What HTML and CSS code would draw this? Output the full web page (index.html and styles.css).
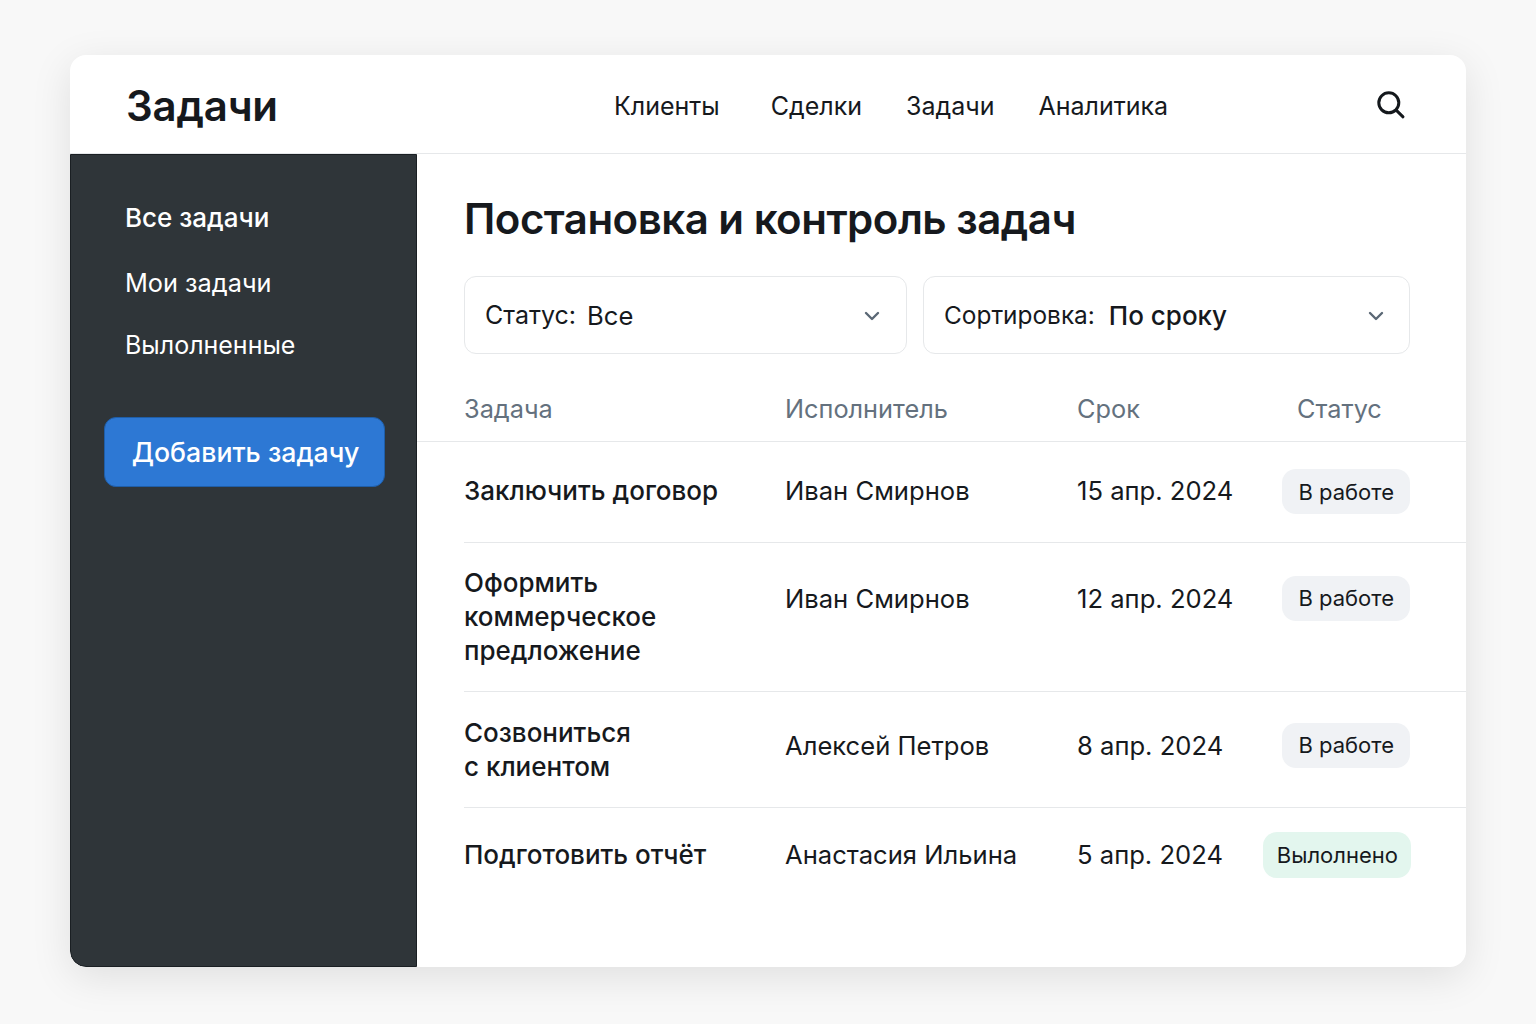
FILE: index.html
```html
<!DOCTYPE html>
<html lang="ru">
<head>
  <meta charset="UTF-8">
  <meta name="viewport" content="width=device-width, initial-scale=1.0">
  <title>Задачи</title>
  <link rel="stylesheet" href="styles.css">
</head>
<body>
  <div class="card">
    <header class="topbar">
      <div class="logo">Задачи</div>
      <nav class="topnav">
        <a class="nav-clients">Клиенты</a>
        <a>Сделки</a>
        <a>Задачи</a>
        <a>Аналитика</a>
      </nav>
      <svg class="search" width="30" height="30" viewBox="0 0 30 30" fill="none" stroke="#14181c" stroke-width="3" stroke-linecap="round">
        <circle cx="12.8" cy="12.8" r="10"/>
        <path d="M20.2 20.2 L27 26.8"/>
      </svg>
    </header>
    <div class="layout">
      <aside class="sidebar">
        <a class="side-link side-active">Все задачи</a>
        <a class="side-link side-second">Мои задачи</a>
        <a class="side-link">Вылолненные</a>
        <button class="add-btn">Добавить задачу</button>
      </aside>
      <main class="content">
        <h1>Постановка и контроль задач</h1>
        <div class="filters">
          <div class="select select-status">
            <span>Статус:</span><span class="select-value">Все</span>
            <svg class="chevron" width="16" height="10" viewBox="0 0 16 10" fill="none" stroke="#5b6875" stroke-width="2.4" stroke-linecap="round" stroke-linejoin="round"><path d="M2 2 L8 8 L14 2"/></svg>
          </div>
          <div class="select select-sort">
            <span class="sort-label">Сортировка:</span><span class="select-value select-strong">По сроку</span>
            <svg class="chevron" width="16" height="10" viewBox="0 0 16 10" fill="none" stroke="#5b6875" stroke-width="2.4" stroke-linecap="round" stroke-linejoin="round"><path d="M2 2 L8 8 L14 2"/></svg>
          </div>
        </div>
        <div class="table-head">
          <span>Задача</span>
          <span>Исполнитель</span>
          <span>Срок</span>
          <span>Статус</span>
        </div>
        <div class="row row-1">
          <div class="task">Заключить договор</div>
          <div>Иван Смирнов</div>
          <div>15 апр. 2024</div>
          <div class="badge">В работе</div>
        </div>
        <div class="row row-2">
          <div class="task">Оформить<br>коммерческое<br>предложение</div>
          <div>Иван Смирнов</div>
          <div>12 апр. 2024</div>
          <div class="badge">В работе</div>
        </div>
        <div class="row row-3">
          <div class="task">Созвониться<br>с клиентом</div>
          <div>Алексей Петров</div>
          <div>8 апр. 2024</div>
          <div class="badge">В работе</div>
        </div>
        <div class="row row-4">
          <div class="task">Подготовить отчёт</div>
          <div>Анастасия Ильина</div>
          <div>5 апр. 2024</div>
          <div class="badge badge-done">Вылолнено</div>
        </div>
      </main>
    </div>
  </div>
</body>
</html>
```

FILE: styles.css
```css
* {
  box-sizing: border-box;
}
body {
  margin: 0;
  padding: 55px 70px 57px;
  background-color: #f8f8f8;
  font-family: Inter, "Liberation Sans", sans-serif;
  color: #16191d;
}
.card {
  height: 912px;
  display: flex;
  flex-direction: column;
  background-color: #fff;
  border-radius: 16px;
  overflow: hidden;
  box-shadow: 0 10px 40px rgba(0, 0, 0, 0.1);
}
.topbar {
  height: 99px;
  flex: none;
  display: flex;
  align-items: center;
  padding: 2px 60px 0 56px;
  border-bottom: 1px solid #e6e8ea;
}
.logo {
  width: 488px;
  font-size: 42px;
  font-weight: 600;
  letter-spacing: -0.2px;
}
.topnav {
  display: flex;
  gap: 44px;
  padding-top: 2px;
  font-size: 25px;
}
.nav-clients {
  margin-right: 7px;
}
.search {
  margin-left: auto;
}
.layout {
  flex: 1;
  display: flex;
}
.sidebar {
  width: 347px;
  flex: none;
  display: flex;
  flex-direction: column;
  align-items: flex-start;
  padding: 44px 32px 0 33px;
  background-color: #2f3539;
  border: 1px solid #1a1f23;
  border-bottom-left-radius: 16px;
  color: #fff;
}
.side-link {
  margin-left: 21px;
  height: 64px;
  font-size: 25px;
  line-height: 36px;
}
.side-active {
  height: 66px;
  padding-top: 1px;
  font-size: 26px;
  font-weight: 500;
}
.side-second {
  height: 62px;
  font-size: 25.3px;
}
.add-btn {
  width: 281px;
  height: 70px;
  margin-top: 26px;
  padding: 0 0 0 2px;
  border: 1px solid #1f5ea8;
  border-radius: 12px;
  background-color: #2d78d4;
  color: #fff;
  font-family: inherit;
  font-size: 26.7px;
  font-weight: 500;
}
.content {
  flex: 1;
  padding-top: 38px;
}
h1 {
  margin: 0 0 30px 47px;
  font-size: 42px;
  line-height: 54px;
  font-weight: 600;
  letter-spacing: -0.5px;
}
.filters {
  display: flex;
  gap: 16px;
  margin: 0 56px 0 47px;
}
.select {
  height: 78px;
  display: flex;
  align-items: center;
  padding: 0 25px 0 20px;
  border: 1px solid #e6e8ea;
  border-radius: 12px;
  font-size: 25px;
}
.select-status {
  width: 443px;
  padding-right: 26px;
}
.select-sort {
  flex: 1;
}
.select-value {
  margin-left: 10px;
}
.select-status .select-value {
  margin-left: 11px;
  font-size: 25.6px;
}
.sort-label {
  font-size: 24.4px;
}
.select-strong {
  margin-left: 14px;
  font-size: 26px;
  font-weight: 500;
}
.chevron {
  margin: 2px 0 0 auto;
}
.table-head {
  height: 88px;
  display: grid;
  grid-template-columns: 321px 292px 220px auto;
  align-items: center;
  padding: 21px 0 0 47px;
  border-bottom: 1px solid #e6e8ea;
  color: #64717e;
  font-size: 25.3px;
}
.row {
  display: grid;
  grid-template-columns: 321px 292px 1fr auto;
  align-items: center;
  margin-left: 47px;
  padding-right: 56px;
  border-bottom: 1px solid #e6e8ea;
  font-size: 25.6px;
}
.row-1 {
  height: 101px;
  padding-bottom: 1px;
}
.row-1 > :not(.badge) {
  margin-bottom: 2px;
}
.row-2 {
  height: 149px;
}
.row-2 > :not(.task) {
  margin-bottom: 38px;
}
.row-3 {
  height: 116px;
}
.row-3 > :not(.task) {
  margin-bottom: 9px;
}
.row-4 {
  height: 93px;
  border-bottom: none;
}
.task {
  font-size: 26px;
  font-weight: 500;
  line-height: 34px;
}
.badge {
  height: 45px;
  display: flex;
  align-items: center;
  padding: 0 16px;
  border-radius: 14px;
  background-color: #f0f2f5;
  font-size: 22px;
}
.badge-done {
  height: 46px;
  margin-right: -1px;
  background-color: #e3f6ee;
  padding: 0 13px 0 14px;
}
```
